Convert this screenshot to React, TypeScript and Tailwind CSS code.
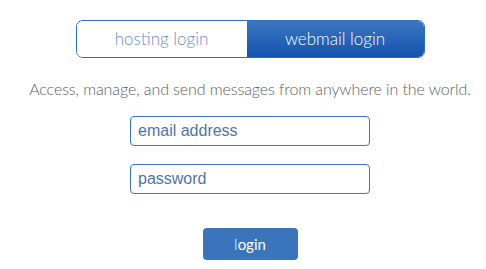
export default function App() {
  return (
    <div className="w-[486px] h-[269px] bg-white flex flex-col items-center pl-[14px] font-['Lato',sans-serif]">
      {/* Segmented switch */}
      <div className="mt-[20px] flex w-[349px] h-[38px] rounded-[7px] border border-[#2f6fc0] overflow-hidden">
        <button className="w-[170px] h-full bg-white text-[#6a8fc4] text-[17px] font-light">
          hosting login
        </button>
        <button className="flex-1 h-full bg-gradient-to-b from-[#3a76c0] to-[#1353ae] text-white text-[17px] font-light">
          webmail login
        </button>
      </div>

      <p className="mt-[19px] text-[16px] font-light text-[#5e5e5e] tracking-[-0.1px]">
        Access, manage, and send messages from anywhere in the world.
      </p>

      <div className="mt-[15px] flex flex-col gap-[18px]">
        <input
          placeholder="email address"
          className="w-[240px] h-[30px] rounded-[4px] border border-[#3b78c2] px-[7px] text-[16px] font-['Liberation_Sans',Arial,sans-serif] placeholder:text-[#5073ad] outline-none"
        />
        <input
          type="password"
          placeholder="password"
          className="w-[240px] h-[30px] rounded-[4px] border border-[#3b78c2] px-[7px] text-[16px] font-['Liberation_Sans',Arial,sans-serif] placeholder:text-[#5073ad] outline-none"
        />
      </div>

      <button className="mt-[34px] w-[95px] h-[32px] rounded-[4px] bg-[#3a75bb] text-white text-[15px]">
        <span className="text-[#8fd0ff]">l</span>ogin
      </button>
    </div>
  )
}
